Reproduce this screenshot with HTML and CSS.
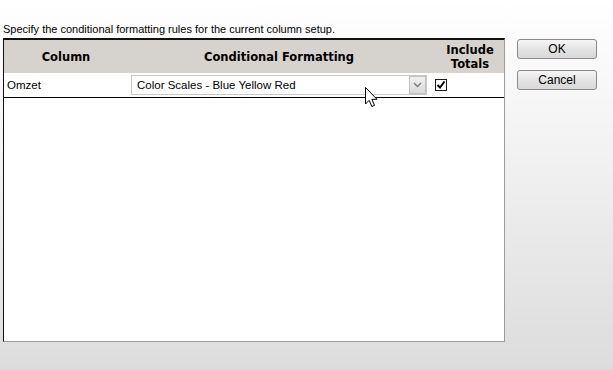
FILE: index.html
```html
<!DOCTYPE html>
<html lang="en">
<head>
    <meta charset="UTF-8">
    <title>Conditional Formatting</title>
    <link rel="stylesheet" href="styles.css">
</head>
<body>
    <div class="dialog">
        <div class="main">
            <p class="intro">Specify the conditional formatting rules for the current column setup.</p>
            <div class="grid">
                <div class="grid-head">
                    <div class="col-name">Column</div>
                    <div class="col-format">Conditional Formatting</div>
                    <div class="col-totals">Include<br>Totals</div>
                </div>
                <div class="grid-row">
                    <div class="col-name cell-text">Omzet</div>
                    <div class="col-format">
                        <div class="combo">
                            <span>Color Scales - Blue Yellow Red</span>
                            <span class="combo-btn">
                                <svg width="9" height="6" viewBox="0 0 9 6"><path d="M1 1 L4.5 4.5 L8 1" fill="none" stroke="#7a7a7a" stroke-width="1.4"/></svg>
                            </span>
                        </div>
                    </div>
                    <div class="col-totals check-cell">
                        <span class="checkbox">
                            <svg width="10" height="10" viewBox="0 0 10 10"><path d="M1.5 5 L4 7.5 L8.5 1.5" fill="none" stroke="#000" stroke-width="2"/></svg>
                        </span>
                    </div>
                </div>
            </div>
        </div>
        <div class="side">
            <button class="button">OK</button>
            <button class="button">Cancel</button>
        </div>
    </div>

    <svg class="cursor" width="15" height="23" viewBox="0 0 15 23">
        <path d="M0.5 0.5 L0.5 17 L4.2 13.3 L6.8 19.5 L9.5 18.4 L6.9 12.3 L12 12.3 Z" fill="#fff" stroke="#000" stroke-width="1"/>
    </svg>
</body>
</html>
```

FILE: styles.css
```css
html, body {
    height: 100%;
}
body {
    margin: 0;
    font-family: 'Liberation Sans', Arial, sans-serif;
    font-size: 11px;
    color: #000;
    background: linear-gradient(#ffffff 0%, #f4f4f4 35%, #dcdcdc 100%);
    overflow: hidden;
    position: relative;
}
.dialog {
    display: flex;
    align-items: flex-start;
}
.main {
    margin-left: 3px;
    width: 502px;
}
.intro {
    margin: 0;
    height: 38px;
    box-sizing: border-box;
    padding-top: 22px;
    line-height: 14px;
}
.grid {
    height: 304px;
    box-sizing: border-box;
    background: #fff;
    border-top: 2px solid #111;
    border-left: 1px solid #111;
    border-right: 1px solid #9c9c9c;
    border-bottom: 1px solid #9c9c9c;
}
.grid-head, .grid-row {
    display: flex;
}
.grid-head {
    height: 33px;
    background-color: #d6d3ce;
    font-family: 'DejaVu Sans', Verdana, sans-serif;
    font-weight: bold;
    font-size: 11.5px;
    line-height: 14px;
    align-items: center;
    text-align: center;
}
.grid-row {
    height: 24px;
    border-bottom: 1px solid #000;
    align-items: center;
}
.col-name {
    width: 124px;
}
.col-format {
    width: 302px;
    padding-left: 3px;
    box-sizing: border-box;
}
.col-totals {
    flex: 1;
}
.cell-text {
    padding-left: 3px;
    box-sizing: border-box;
    font-size: 11.5px;
}
.grid-head .col-name, .grid-head .col-format {
    padding-left: 0;
}
.grid-head .col-totals {
    padding-left: 6px;
}
.combo {
    width: 296px;
    height: 20px;
    box-sizing: border-box;
    border: 1px solid #c9c9c9;
    display: flex;
    align-items: center;
    justify-content: space-between;
    padding-left: 5px;
    font-size: 11.5px;
}
.combo-btn {
    width: 17px;
    height: 18px;
    box-sizing: border-box;
    border: 1px solid #c2c2c2;
    background: linear-gradient(#f0f0f0, #dadada);
    display: flex;
    align-items: center;
    justify-content: center;
}
.check-cell {
    padding-left: 5px;
}
.checkbox {
    display: flex;
    align-items: center;
    justify-content: center;
    width: 12px;
    height: 12px;
    box-sizing: border-box;
    border: 1px solid #1c1c1c;
    background: #fff;
}
.side {
    margin-left: 12px;
    padding-top: 39px;
    display: flex;
    flex-direction: column;
    gap: 11px;
}
.button {
    width: 80px;
    height: 20px;
    font-family: 'Liberation Sans', Arial, sans-serif;
    font-size: 12px;
    color: #000;
    border: 1px solid #8a8a8a;
    border-radius: 3px;
    background: linear-gradient(#f6f6f6, #e4e4e4 50%, #d8d8d8);
    padding: 0;
}
.cursor {
    position: absolute;
    left: 365px;
    top: 87px;
}
```
